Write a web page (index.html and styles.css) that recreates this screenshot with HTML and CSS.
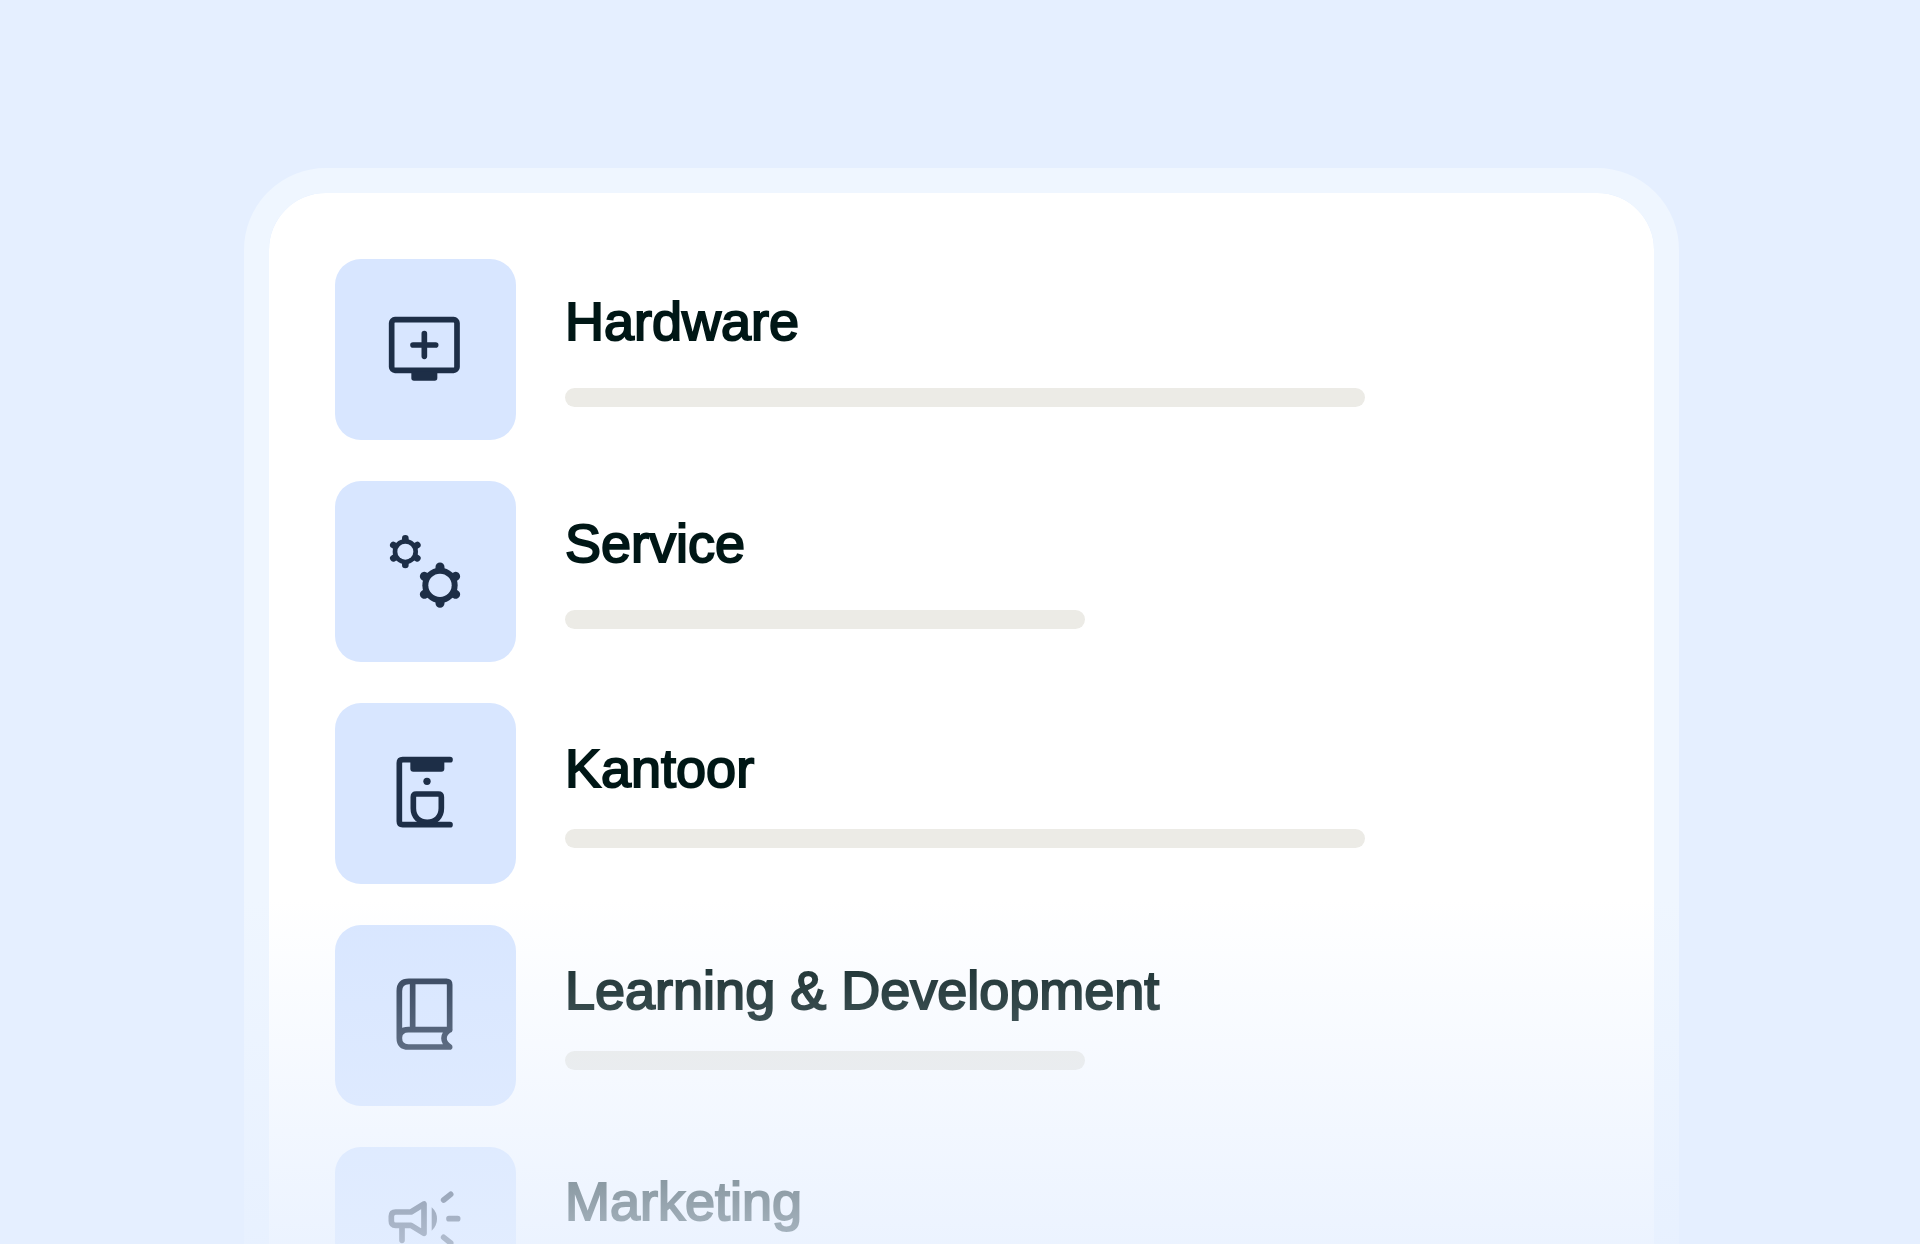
FILE: index.html
```html
<!DOCTYPE html>
<html lang="nl">
<head>
<meta charset="utf-8">
<meta name="viewport" content="width=device-width, initial-scale=1">
<title>Budgetten</title>
<link rel="stylesheet" href="styles.css">
</head>
<body>
<main class="stage">
  <ul class="card">
    <li class="row">
      <span class="tile">
        <svg viewBox="14 12 543 543" aria-hidden="true">
          <rect class="line" x="184" y="194" width="196" height="152" rx="10"/>
          <path class="line" d="M282 236V304M248 270H316"/>
          <path class="solid" d="M243 350H321V369Q321 377 313 377H251Q243 377 243 369Z"/>
        </svg>
      </span>
      <div class="text">
        <h2 class="title">Hardware</h2>
        <span class="bar bar-long"></span>
      </div>
    </li>
    <li class="row">
      <span class="tile">
        <svg viewBox="14 12 543 543" aria-hidden="true">
          <circle class="solid" cx="225" cy="224" r="38"/>
          <path class="line teeth-small" d="M225 184V192M189 204L197 209M189 244L197 239M225 264V256M261 244L253 239M261 204L253 209"/>
          <circle class="hole" cx="225" cy="224" r="24"/>
          <circle class="solid" cx="329" cy="325" r="53"/>
          <path class="line teeth-large" d="M329 270V280M282 298L291 303M282 352L291 347M329 379V370M376 352L367 347M376 298L367 303"/>
          <circle class="hole" cx="329" cy="325" r="35"/>
        </svg>
      </span>
      <div class="text">
        <h2 class="title">Service</h2>
        <span class="bar bar-short"></span>
      </div>
    </li>
    <li class="row row-tight">
      <span class="tile">
        <svg viewBox="14 9 543 543" aria-hidden="true">
          <path class="line" d="M359 179H217Q207 179 207 189V364Q207 374 217 374H359"/>
          <path class="solid" d="M240 183H342V206Q342 215 333 215H249Q240 215 240 206Z"/>
          <circle class="solid" cx="290" cy="244" r="11"/>
          <path class="line" d="M258 282H324Q333 282 333 291V325C333 350 316 367 291 367C266 367 249 350 249 325V291Q249 282 258 282Z"/>
        </svg>
      </span>
      <div class="text">
        <h2 class="title">Kantoor</h2>
        <span class="bar bar-long"></span>
      </div>
    </li>
    <li class="row row-tight">
      <span class="tile">
        <svg viewBox="14 14 543 543" aria-hidden="true">
          <path class="line" d="M358 328V193Q358 183 348 183H236Q207 183 207 212V353Q207 380 234 380H358Q341 369 341 354Q341 339 358 328H234Q207 328 207 353M247 184V328"/>
        </svg>
      </span>
      <div class="text">
        <h2 class="title">Learning &amp; Development</h2>
        <span class="bar bar-short"></span>
      </div>
    </li>
    <li class="row row-open">
      <span class="tile">
        <svg viewBox="14 19 543 543" aria-hidden="true">
          <path class="line" d="M196 214H242L281 190V278L242 254H196Q183 254 183 241V227Q183 214 196 214ZM215 256V299M340 178L361 161M356 234H382M340 290L361 307"/>
          <path class="solid" d="M304 200Q320 214 320 235Q320 256 304 270Z"/>
        </svg>
      </span>
      <div class="text">
        <h2 class="title">Marketing</h2>
        <span class="bar bar-long"></span>
      </div>
    </li>
  </ul>
</main>
</body>
</html>
```
FILE: styles.css
```css
* {
  box-sizing: border-box;
}

body {
  margin: 0;
  background: #e5efff;
  color: #001716;
  font-family: "Liberation Sans", Arial, sans-serif;
}

.stage {
  position: relative;
  height: 100vh;
  padding: 168px 241px 0 244px;
  overflow: hidden;
}

/* Fades the lower rows into the page background */
.stage::after {
  content: "";
  position: absolute;
  inset: auto 0 0;
  height: 345px;
  background: linear-gradient(rgba(229, 239, 255, 0), rgba(229, 239, 255, 0.74));
}

.card {
  display: flex;
  flex-direction: column;
  gap: 41px;
  margin: 0;
  padding: 66px;
  list-style: none;
  background: #fff;
  background-clip: padding-box;
  border: 25px solid #eff6ff;
  border-radius: 82px;
}

.row {
  display: flex;
  align-items: center;
  gap: 49px;
}

.tile {
  flex: none;
  width: 181px;
  height: 181px;
  border-radius: 26px;
  background: #d8e6ff;
}

.tile svg {
  display: block;
  width: 100%;
  height: 100%;
}

.line {
  fill: none;
  stroke: #1d2e47;
  stroke-width: 17;
  stroke-linecap: round;
  stroke-linejoin: round;
}

.solid {
  fill: #1d2e47;
}

.hole {
  fill: #d8e6ff;
}

.teeth-small {
  stroke-width: 20;
}

.teeth-large {
  stroke-width: 27;
}

.text {
  display: flex;
  flex: 1;
  flex-direction: column;
  gap: 36px;
  min-width: 0;
  padding-bottom: 2px;
}

.row-tight .text {
  gap: 30px;
}

.row-open .text {
  gap: 52px;
}

.title {
  margin: 0;
  font-size: 54px;
  font-weight: 400;
  line-height: 62px;
  -webkit-text-stroke: 2px currentColor;
}

.bar {
  height: 19px;
  max-width: 100%;
  border-radius: 10px;
  background: #ecebe6;
}

.bar-long {
  width: 800px;
}

.bar-short {
  width: 520px;
}
```
